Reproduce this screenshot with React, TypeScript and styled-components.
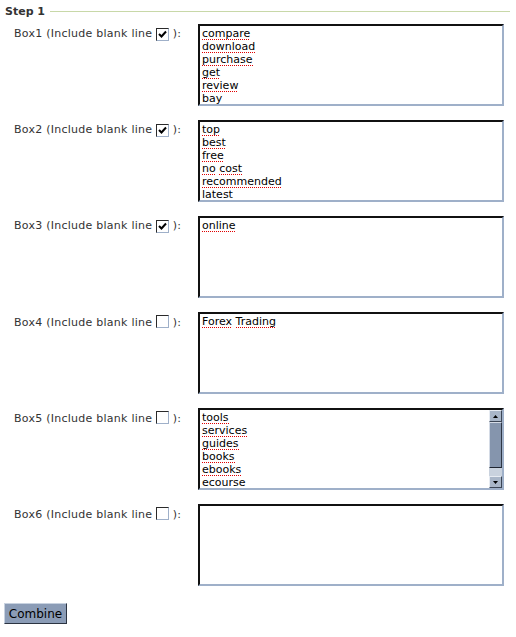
import styled, { createGlobalStyle } from 'styled-components';

const GlobalStyle = createGlobalStyle`
  html, body {
    margin: 0;
    padding: 0;
    background: #ffffff;
  }
  body {
    font-family: 'DejaVu Sans', Verdana, sans-serif;
    font-size: 11px;
    color: #333333;
  }
`;

type Box = {
  name: string;
  checked: boolean;
  lines: string[];
  scroll?: boolean;
};

const boxes: Box[] = [
  { name: 'Box1', checked: true, lines: ['compare', 'download', 'purchase', 'get', 'review', 'bay'] },
  { name: 'Box2', checked: true, lines: ['top', 'best', 'free', 'no cost', 'recommended', 'latest'] },
  { name: 'Box3', checked: true, lines: ['online'] },
  { name: 'Box4', checked: false, lines: ['Forex Trading'] },
  {
    name: 'Box5',
    checked: false,
    lines: ['tools', 'services', 'guides', 'books', 'ebooks', 'ecourse'],
    scroll: true,
  },
  { name: 'Box6', checked: false, lines: [] },
];

// every word gets the red spell-check dots
const Words = ({ text }: { text: string }) => (
  <>
    {text.split(' ').map((w, i) => (
      <span key={i}>
        {i > 0 && ' '}
        <Misspelt>{w}</Misspelt>
      </span>
    ))}
  </>
);

const CheckBox = ({ checked }: { checked: boolean }) => (
  <Check>
    {checked && (
      <svg width="9" height="9" viewBox="0 0 9 9">
        <path d="M1 4 L3.5 6.5 L8 1.5" fill="none" stroke="#000" strokeWidth="2" />
      </svg>
    )}
  </Check>
);

const ScrollBar = () => (
  <Scroll>
    <ArrowButton>
      <svg width="5" height="3" viewBox="0 0 5 3">
        <path d="M0 3 L2.5 0 L5 3 Z" fill="#000" />
      </svg>
    </ArrowButton>
    <Thumb />
    <Track />
    <ArrowButton>
      <svg width="5" height="3" viewBox="0 0 5 3">
        <path d="M0 0 L2.5 3 L5 0 Z" fill="#000" />
      </svg>
    </ArrowButton>
  </Scroll>
);

const App = () => {
  return (
    <Page>
      <GlobalStyle />
      <Header>
        <Title>Step 1</Title>
        <Rule />
      </Header>
      <Rows>
        {boxes.map((b) => (
          <Row key={b.name}>
            <Label>
              {b.name} (Include blank line <CheckBox checked={b.checked} /> ):
            </Label>
            <TextBox>
              <Lines>
                {b.lines.map((l) => (
                  <Line key={l}>
                    <Words text={l} />
                  </Line>
                ))}
              </Lines>
              {b.scroll && <ScrollBar />}
            </TextBox>
          </Row>
        ))}
      </Rows>
      <Button>Combine</Button>
    </Page>
  );
};

const Page = styled.div`
  padding: 4px 1px 0 4px;
  width: 511px;
  box-sizing: border-box;
`;

const Header = styled.div`
  display: flex;
  align-items: center;
  gap: 5px;
  height: 14px;
`;

const Title = styled.div`
  font-weight: bold;
  font-size: 11px;
  color: #333333;
  padding-left: 1px;
`;

const Rule = styled.div`
  flex: 1;
  height: 1px;
  background: #c8d8a8;
`;

const Rows = styled.div`
  display: flex;
  flex-direction: column;
  gap: 14px;
  margin-top: 6px;
`;

const Row = styled.div`
  display: grid;
  grid-template-columns: 194px 306px;
`;

const Label = styled.div`
  padding: 3px 0 0 10px;
  line-height: 13px;
  letter-spacing: 0.25px;
  white-space: nowrap;
`;

const Check = styled.span`
  display: inline-flex;
  align-items: center;
  justify-content: center;
  vertical-align: -2px;
  width: 13px;
  height: 13px;
  box-sizing: border-box;
  border: 1px solid;
  border-color: #2a2a2a #9fb0c9 #9fb0c9 #2a2a2a;
  background: #ffffff;
`;

const TextBox = styled.div`
  display: flex;
  height: 82px;
  box-sizing: border-box;
  border: 2px solid;
  border-color: #111111 #9fb0c9 #9fb0c9 #111111;
  background: #ffffff;
  overflow: hidden;
`;

const Lines = styled.div`
  flex: 1;
  padding: 1px 2px;
  color: #000000;
  line-height: 13px;
  overflow: hidden;
`;

const Line = styled.div`
  white-space: pre;
  height: 13px;
`;

const Misspelt = styled.span`
  display: inline-block;
  height: 13px;
  background-image: linear-gradient(to right, #e00000 50%, transparent 50%);
  background-size: 2px 1px;
  background-repeat: repeat-x;
  background-position: 0 100%;
`;

const Scroll = styled.div`
  display: flex;
  flex-direction: column;
  width: 13px;
  background: #c9d2de;
`;

const ArrowButton = styled.div`
  display: flex;
  align-items: center;
  justify-content: center;
  height: 12px;
  box-sizing: border-box;
  border: 1px solid;
  border-color: #e6ebf2 #3c4656 #3c4656 #e6ebf2;
  background: #a9b6c8;
`;

const Thumb = styled.div`
  height: 46px;
  box-sizing: border-box;
  border: 1px solid;
  border-color: #d4dbe6 #2e3644 #1e2430 #d4dbe6;
  background: #8595ad;
`;

const Track = styled.div`
  flex: 1;
  background: #c9d2de;
`;

const Button = styled.button`
  display: block;
  margin-top: 17px;
  width: 63px;
  height: 21px;
  padding: 0;
  font-family: 'DejaVu Sans', Verdana, sans-serif;
  font-size: 12px;
  color: #000000;
  background: #8b9cb6;
  border: 1px solid;
  border-color: #c8d2e0 #2c3442 #2c3442 #c8d2e0;
`;

export default App;
